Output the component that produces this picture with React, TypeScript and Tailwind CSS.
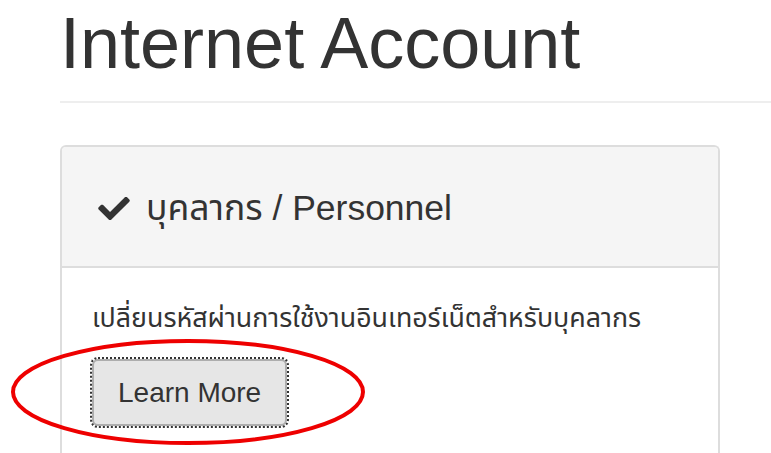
import React from "react";

const FONT = "font-['Liberation_Sans','Noto_Sans_Thai','Noto_Sans',sans-serif]";

function CheckIcon() {
  return (
    <svg width="32" height="23" viewBox="0 69 512 373" className="shrink-0" fill="#333">
      <path d="M173.9 439.4l-166.4-166.4c-10-10-10-26.2 0-36.2l36.2-36.2c10-10 26.2-10 36.2 0L192 312.7 432.1 72.6c10-10 26.2-10 36.2 0l36.2 36.2c10 10 10 26.2 0 36.2l-294.4 294.4c-10 10-26.2 10-36.2 0z" />
    </svg>
  );
}

export default function App() {
  return (
    <div className={`relative min-h-screen overflow-hidden bg-white text-[#333] ${FONT}`}>
      <div className="pl-[60px]">
        <div className="border-b-2 border-[#eee] pt-[4px] pb-[18px]">
          <h1 className="text-[72px] leading-[79px] font-normal">Internet Account</h1>
        </div>

        <div className="mt-[42px] w-[660px] rounded-t-[6px] border-2 border-b-0 border-[#ddd]">
          <div className="flex items-center gap-[16px] rounded-t-[4px] border-b-2 border-[#ddd] bg-[#f5f5f5] px-[36px] pt-[41px] pb-[38px]">
            <CheckIcon />
            <h3 className="text-[35.5px] leading-[40px]">บุคลากร / Personnel</h3>
          </div>
          <div className="px-[30px] pt-[30px] pb-[40px]">
            <p className="mb-[21px] text-[26.8px] leading-[40px]">
              เปลี่ยนรหัสผ่านการใช้งานอินเทอร์เน็ตสำหรับบุคลากร
            </p>
            <button className="rounded-[6px] border-2 border-[#adadad] bg-[#e6e6e6] px-[24px] py-[12px] text-[28px] leading-[39px] text-[#333] outline-2 outline-dotted outline-[#333]">
              Learn More
            </button>
          </div>
        </div>
      </div>

      {/* red annotation ring around the button */}
      <svg className="pointer-events-none absolute left-[10px] top-[338px]" width="356" height="108">
        <ellipse cx="178" cy="54" rx="175" ry="51" fill="none" stroke="#ee0000" strokeWidth="4" />
      </svg>
    </div>
  );
}
